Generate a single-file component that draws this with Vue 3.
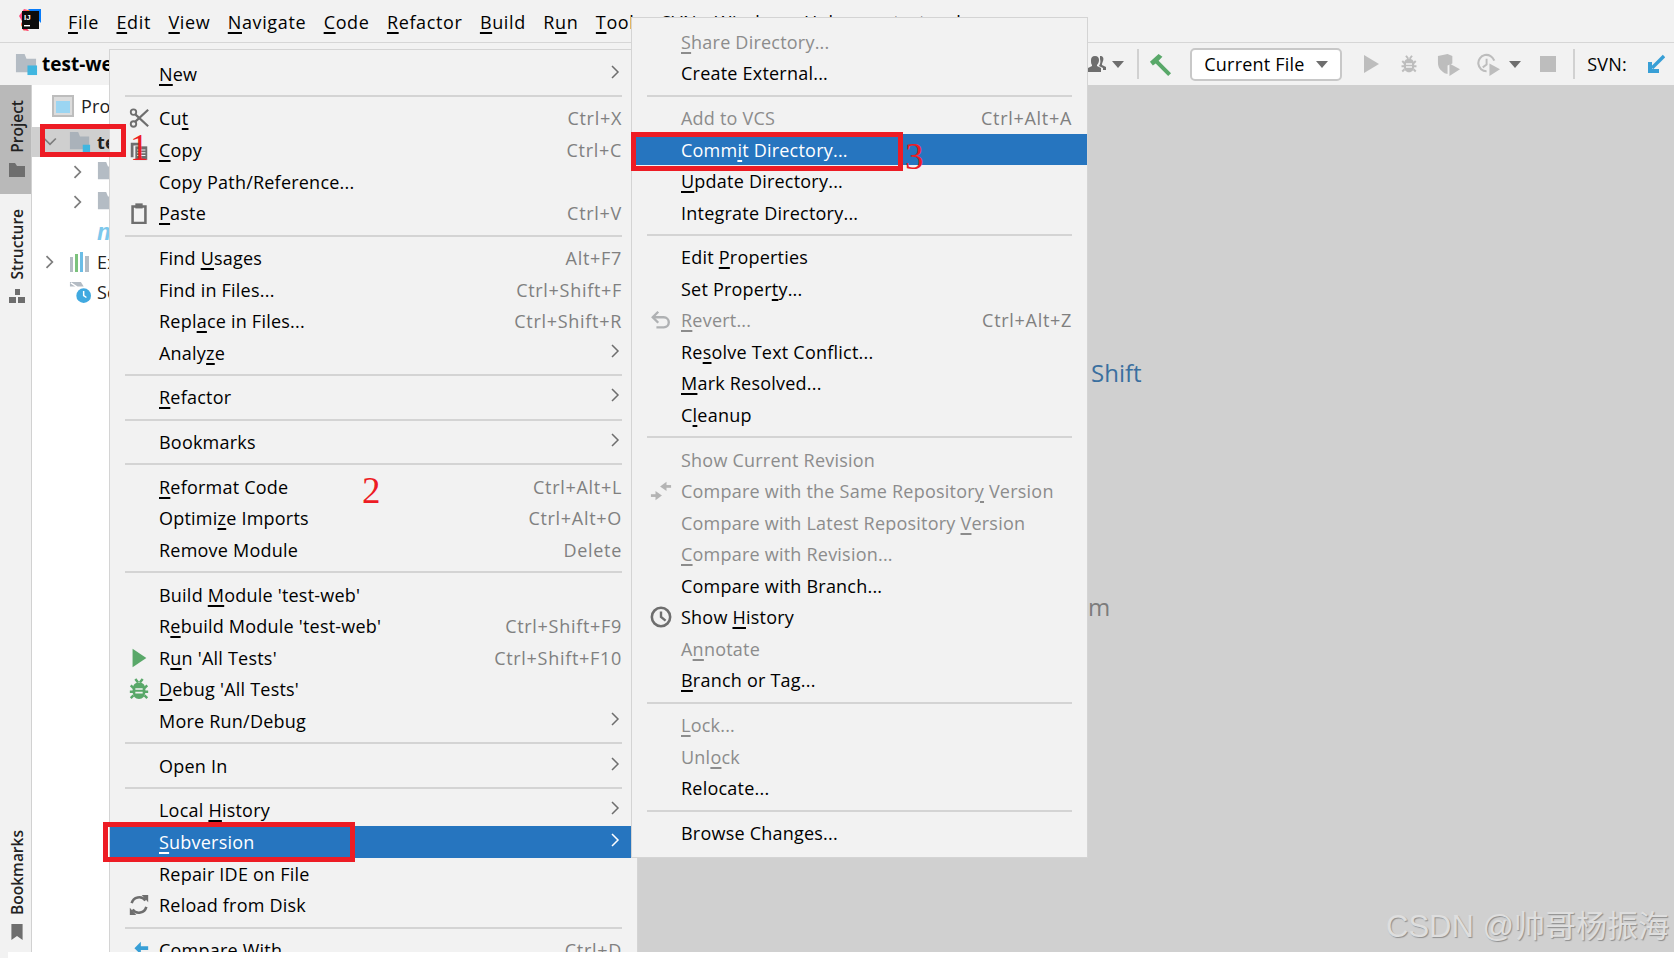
<script setup>
const parse = (s) => {
  const i = s.indexOf('_')
  return i < 0 ? [s, '', ''] : [s.slice(0, i), s[i + 1], s.slice(i + 2)]
}
const row = (label, opts = {}) => ({ label, parts: parse(label), ...opts })
const SEP = { sep: true }

const topMenus = ['_File', '_Edit', '_View', '_Navigate', '_Code', '_Refactor', '_Build', 'R_un', '_Tools', 'SVN', '_Window', '_Help'].map((m) => parse(m))

const mainMenu = [
  row('_New', { sub: true }), SEP,
  row('Cu_t', { sc: 'Ctrl+X', icon: 'cut' }),
  row('_Copy', { sc: 'Ctrl+C', icon: 'copy' }),
  row('Copy Path/Reference...'),
  row('_Paste', { sc: 'Ctrl+V', icon: 'paste' }), SEP,
  row('Find _Usages', { sc: 'Alt+F7' }),
  row('Find in Files...', { sc: 'Ctrl+Shift+F' }),
  row('Repl_ace in Files...', { sc: 'Ctrl+Shift+R' }),
  row('Analy_ze', { sub: true }), SEP,
  row('_Refactor', { sub: true }), SEP,
  row('Bookmarks', { sub: true }), SEP,
  row('_Reformat Code', { sc: 'Ctrl+Alt+L' }),
  row('Optimi_ze Imports', { sc: 'Ctrl+Alt+O' }),
  row('Remove Module', { sc: 'Delete' }), SEP,
  row("Build _Module 'test-web'"),
  row("R_ebuild Module 'test-web'", { sc: 'Ctrl+Shift+F9' }),
  row("R_un 'All Tests'", { sc: 'Ctrl+Shift+F10', icon: 'run' }),
  row("_Debug 'All Tests'", { icon: 'debug' }),
  row('More Run/Debug', { sub: true }), SEP,
  row('Open In', { sub: true }), SEP,
  row('Local _History', { sub: true }),
  row('_Subversion', { sub: true, active: true }),
  row('Repair IDE on File'),
  row('Reload from Disk', { icon: 'reload' }), SEP,
  row('Compare With', { sc: 'Ctrl+D', icon: 'compare' }),
]

const svnMenu = [
  row('_Share Directory...', { off: true }),
  row('Create External...'), SEP,
  row('Add to VCS', { off: true, sc: 'Ctrl+Alt+A' }),
  row('Comm_it Directory...', { active: true }),
  row('_Update Directory...'),
  row('Inte_grate Directory...'), SEP,
  row('Edit _Properties'),
  row('Set Proper_ty...'),
  row('_Revert...', { off: true, sc: 'Ctrl+Alt+Z', icon: 'revert' }),
  row('Re_solve Text Conflict...'),
  row('_Mark Resolved...'),
  row('C_leanup'), SEP,
  row('Show Current Revision', { off: true }),
  row('Compare with the Same Repositor_y Version', { off: true, icon: 'diff' }),
  row('Compare with Latest Repository _Version', { off: true }),
  row('_Compare with Revision...', { off: true }),
  row('Compare with Branch...'),
  row('Show _History', { icon: 'clock' }),
  row('A_nnotate', { off: true }),
  row('_Branch or Tag...'), SEP,
  row('_Lock...', { off: true }),
  row('Unl_ock', { off: true }),
  row('Relocate...'), SEP,
  row('Browse Changes...'),
]

const G = '#6e6e6e'
const icons = {
  cut: [
    { d: 'M3 5.5a3 3 0 1 0 6 0a3 3 0 1 0-6 0M3 18.5a3 3 0 1 0 6 0a3 3 0 1 0-6 0', s: G },
    { d: 'M8 8L22 21M8 16L22 3', s: G, w: 2.4 },
  ],
  copy: [
    { d: 'M3 4h9v3H6v13H3z', f: G },
    { d: 'M8 8h13v15H8z', f: G },
    { d: 'M10 12h9M10 15h9M10 18h9', s: '#f2f2f2', w: 1.2 },
  ],
  paste: [
    { d: 'M5 5h14v18H5z', s: G, w: 2.8 },
    { d: 'M8 1.5h8V7H8z', f: G },
  ],
  run: [{ d: 'M5 2L20 12L5 22z', f: '#59a869' }],
  debug: [
    { d: 'M12 5c5 0 7 3 7 9s-3 9-7 9s-7-3-7-9s2-9 7-9z', f: '#59a869' },
    { d: 'M8 1l3 4M16 1l-3 4M3 8l3 3M21 8l-3 3M2 15h4M22 15h-4M3 22l3-3M21 22l-3-3', s: '#59a869', w: 2.6 },
    { d: 'M8 12h8M8 16h8', s: '#f2f2f2', w: 1.8 },
  ],
  reload: [
    { d: 'M4 10a8.5 8.5 0 0 1 15-3', s: G, w: 2.8 },
    { d: 'M15 1h7v8z', f: G },
    { d: 'M20 14a8.5 8.5 0 0 1-15 3', s: G, w: 2.8 },
    { d: 'M9 23H2v-8z', f: G },
  ],
  compare: [
    { d: 'M22 8h-8V3l-7 7l7 7v-5h8z', f: '#389fd6' },
    { d: 'M2 23l5-8', s: '#389fd6', w: 3 },
  ],
  revert: [
    { d: 'M9 3L3 9l6 6', s: '#afb1b3', w: 2.6 },
    { d: 'M4 9h11a5 5 0 0 1 0 11H7', s: '#afb1b3', w: 2.6 },
  ],
  diff: [
    { d: 'M11 7l7-5v10z', f: '#b4b4b4' },
    { d: 'M16 7H23', s: '#b4b4b4', w: 3 },
    { d: 'M13 17l-7-5v10z', f: '#b4b4b4' },
    { d: 'M8 17H1', s: '#b4b4b4', w: 3 },
  ],
  clock: [
    { d: 'M2 12a10 10 0 1 0 20 0a10 10 0 1 0-20 0', s: G, w: 2.8 },
    { d: 'M12 6v6l5 4', s: G, w: 2.6 },
  ],
}
</script>

<template>
  <div class="ide">
    <header class="menubar">
      <svg class="logo" viewBox="0 0 24 24" aria-hidden="true">
        <path d="M1 8L6 1L14 3L8 20z" fill="#ff4d7e" />
        <path d="M3 17L9 2h10L6 23z" fill="#fc801d" />
        <path d="M10 1h13v14z" fill="#087cfa" />
        <path d="M3 14l8 9l-6-1z" fill="#fe2857" />
        <rect x="4" y="3" width="17" height="18" fill="#0c0c0c" />
        <text x="6" y="11.5" class="logo-text">IJ</text>
        <rect x="6" y="17" width="6" height="1.4" fill="#fff" />
      </svg>
      <nav class="top-items">
        <span v-for="m in topMenus" :key="m.join('')" class="top-item">{{ m[0] }}<u v-if="m[1]">{{ m[1] }}</u>{{ m[2] }}</span>
      </nav>
      <span class="title">test-web</span>
    </header>

    <div class="toolbar">
      <svg class="tb-folder" viewBox="0 0 24 24" aria-hidden="true">
        <path d="M1 1h9l2 5h10v14H1z" fill="#b4bcc4" />
        <rect x="13" y="13" width="10" height="10" fill="#40b6e0" />
      </svg>
      <strong class="crumb">test-web</strong>
      <div class="tb-right">
        <svg class="i20" viewBox="0 0 20 20"><path d="M8 2c3 0 4 2 4 4s-1 4-2 5v1l4 2v4H1v-4l4-2v-1C4 10 4 8 4 6s1-4 4-4z M13 2c3 0 4 2 3 5s-1 3-1 4l4 2v3h-3v-2l-4-2c1-2 2-4 1-7z" fill="#6e6e6e" /></svg>
        <span class="caret g5"></span>
        <span class="vsep g13"></span>
        <svg class="i23 g10" viewBox="0 0 24 24"><path d="M1 9L10 1l4 3l-4 4l13 13l-3 3L7 11l-3 2z" fill="#59a869" /></svg>
        <div class="combo g18"><span>Current File</span><span class="caret dark"></span></div>
        <svg class="i15 g22" viewBox="0 0 15 20"><path d="M0 1l15 9L0 19z" fill="#bdbdbd" /></svg>
        <svg class="i18 g21" viewBox="0 0 24 24">
          <path d="M12 5c5 0 7 3 7 9s-3 9-7 9s-7-3-7-9s2-9 7-9z" fill="#bdbdbd" />
          <path d="M8 1l3 4M16 1l-3 4M3 8l3 3M21 8l-3 3M2 15h4M22 15h-4M3 22l3-3M21 22l-3-3" stroke="#bdbdbd" stroke-width="2.6" fill="none" />
          <path d="M8 12h8M8 16h8" stroke="#f2f2f2" stroke-width="1.8" />
        </svg>
        <svg class="i23 g19" viewBox="0 0 24 24">
          <path d="M1 3l10-2l5 2v8l-5 2v9l-3-1c-5-3-7-6-7-11z" fill="#bdbdbd" />
          <path d="M13 11l11 6l-11 7z" fill="#bdbdbd" />
        </svg>
        <svg class="i23 g17" viewBox="0 0 24 24">
          <path d="M10 19a8.5 8.5 0 1 1 8-11" stroke="#bdbdbd" stroke-width="2.2" fill="none" />
          <path d="M10 6v6l-4 3" stroke="#bdbdbd" stroke-width="2" fill="none" />
          <path d="M13 11l11 6l-11 7z" fill="#bdbdbd" />
        </svg>
        <span class="caret g9"></span>
        <span class="stop g19"></span>
        <span class="vsep g17"></span>
        <span class="svn g12">SVN:</span>
        <svg class="i18 g20" viewBox="0 0 18 20"><path d="M17 2L5 14" stroke="#389fd6" stroke-width="3.4" fill="none" /><path d="M1 8v11h11v-4H5V8z" fill="#389fd6" /></svg>
      </div>
    </div>

    <div class="body">
      <aside class="strip">
        <div class="strip-top">
          <div class="tab active">
            <span class="vtext">Project</span>
            <svg class="tab-icon" viewBox="0 0 16 16"><path d="M0 1h6l2 3h8v11H0z" fill="#6e6e6e" /></svg>
          </div>
          <div class="tab">
            <span class="vtext">Structure</span>
            <svg class="tab-icon" viewBox="0 0 16 16"><path d="M6 1h5v6H6zM0 9h7v6H0zM9 9h7v6H9z" fill="#6e6e6e" /></svg>
          </div>
        </div>
        <div class="tab bottom">
          <span class="vtext">Bookmarks</span>
          <svg class="tab-icon" viewBox="0 0 16 20"><path d="M1 0h14v20l-7-5l-7 5z" fill="#6e6e6e" /></svg>
        </div>
      </aside>

      <section class="tree">
        <div class="tree-head">
          <svg class="t-ico" viewBox="0 0 22 22"><rect x="1" y="1" width="20" height="20" fill="#dcdcdc" stroke="#bdbdbd" stroke-width="2" /><rect x="4" y="6" width="14" height="12" fill="#9bd5f2" /></svg>
          <span class="t-text">Project</span>
        </div>
        <div class="tree-row selected">
          <svg class="chev" viewBox="0 0 12 12"><path d="M1 3l5 5l5-5" stroke="#7d7d7d" stroke-width="1.5" fill="none" /></svg>
          <svg class="t-ico" viewBox="0 0 24 24"><path d="M1 1h9l2 5h10v14H1z" fill="#aab2ba" /><rect x="15" y="15" width="8" height="8" fill="#40b6e0" /></svg>
          <b class="t-text">test-web</b>
        </div>
        <div class="tree-row l2">
          <svg class="chev" viewBox="0 0 12 12"><path d="M3 1l5 5l-5 5" stroke="#7d7d7d" stroke-width="1.5" fill="none" /></svg>
          <svg class="t-ico" viewBox="0 0 24 24"><path d="M1 1h9l2 5h10v14H1z" fill="#b4bcc4" /></svg>
        </div>
        <div class="tree-row l2">
          <svg class="chev" viewBox="0 0 12 12"><path d="M3 1l5 5l-5 5" stroke="#7d7d7d" stroke-width="1.5" fill="none" /></svg>
          <svg class="t-ico" viewBox="0 0 24 24"><path d="M1 1h9l2 5h10v14H1z" fill="#b4bcc4" /></svg>
        </div>
        <div class="tree-row l3"><i class="pom">m</i></div>
        <div class="tree-row">
          <svg class="chev" viewBox="0 0 12 12"><path d="M3 1l5 5l-5 5" stroke="#7d7d7d" stroke-width="1.5" fill="none" /></svg>
          <svg class="t-ico" viewBox="0 0 22 22"><path d="M1 6h3v15H1z" fill="#b4bcc4" /><path d="M6 3h3v18H6z" fill="#7cc27c" /><path d="M11 1h3v20h-3z" fill="#6bbde6" /><path d="M16 5h4v16h-4z" fill="#b4bcc4" /></svg>
          <span class="t-text">External Libraries</span>
        </div>
        <div class="tree-row">
          <svg class="chev ghost" viewBox="0 0 12 12"></svg>
          <svg class="t-ico" viewBox="0 0 24 24"><path d="M1 1h12l3 5H1z" fill="#b4bcc4" /><path d="M2 2l6 4l-6 4" stroke="#fff" stroke-width="1.5" fill="none" /><circle cx="16" cy="16" r="8" fill="#40a9e0" /><path d="M16 11v5l3 2" stroke="#fff" stroke-width="1.6" fill="none" /></svg>
          <span class="t-text">Scratches and Consoles</span>
        </div>
      </section>

      <main class="editor">
        <span class="hint shift">Shift</span>
        <span class="hint dim">m</span>
      </main>
    </div>

    <footer class="foot"></footer>

    <div class="menu main-menu">
      <template v-for="(r, i) in mainMenu" :key="i">
        <div v-if="r.sep" class="sep"></div>
        <div v-else class="item" :class="{ active: r.active, off: r.off }">
          <span class="slot">
            <svg v-if="r.icon" viewBox="0 0 24 24" class="m-ico">
              <path v-for="(p, k) in icons[r.icon]" :key="k" :d="p.d" :fill="p.f || 'none'" :stroke="p.s || 'none'" :stroke-width="p.w || 2" />
            </svg>
          </span>
          <span class="lbl">{{ r.parts[0] }}<u v-if="r.parts[1]">{{ r.parts[1] }}</u>{{ r.parts[2] }}</span>
          <span v-if="r.sc" class="sc">{{ r.sc }}</span>
          <svg v-if="r.sub" class="arrow" viewBox="0 0 10 16"><path d="M2 2l6 6l-6 6" fill="none" stroke="currentColor" stroke-width="1.5" /></svg>
        </div>
      </template>
    </div>

    <div class="menu svn-menu">
      <template v-for="(r, i) in svnMenu" :key="i">
        <div v-if="r.sep" class="sep"></div>
        <div v-else class="item" :class="{ active: r.active, off: r.off }">
          <span class="slot">
            <svg v-if="r.icon" viewBox="0 0 24 24" class="m-ico">
              <path v-for="(p, k) in icons[r.icon]" :key="k" :d="p.d" :fill="p.f || 'none'" :stroke="p.s || 'none'" :stroke-width="p.w || 2" />
            </svg>
          </span>
          <span class="lbl">{{ r.parts[0] }}<u v-if="r.parts[1]">{{ r.parts[1] }}</u>{{ r.parts[2] }}</span>
          <span v-if="r.sc" class="sc">{{ r.sc }}</span>
        </div>
      </template>
    </div>

    <div class="mark box-tree"></div>
    <div class="mark box-sub"></div>
    <div class="mark box-commit"></div>
    <span class="num n1">1</span>
    <span class="num n2">2</span>
    <span class="num n3">3</span>
    <span class="watermark">CSDN @帅哥杨振海</span>
  </div>
</template>

<style>
html, body { margin: 0; background: #fff; }
</style>

<style scoped>
.ide {
  position: relative;
  width: 1674px;
  height: 958px;
  overflow: hidden;
  display: flex;
  flex-direction: column;
  background: #f2f2f2;
  font-family: "Open Sans", "Noto Sans", sans-serif;
  font-size: 18px;
  letter-spacing: 0.22px;
  color: #000;
}
u { text-underline-offset: 3px; text-decoration-thickness: 1.5px; }

.menubar {
  height: 42px;
  flex: none;
  display: flex;
  align-items: center;
  padding-left: 18px;
  border-bottom: 1px solid #d6d6d6;
  box-sizing: content-box;
}
.logo { width: 24px; height: 24px; flex: none; margin-top: -2px; }
.logo-text { font: 700 8px "Liberation Sans", sans-serif; fill: #fff; letter-spacing: 0; }
.top-items { display: flex; gap: 17.5px; margin-left: 26px; padding-top: 1px; letter-spacing: 0.62px; }
.title { margin-left: 48px; padding-top: 1px; }

.toolbar {
  height: 42px;
  flex: none;
  display: flex;
  align-items: center;
  padding-left: 15px;
  padding-right: 9px;
}
.tb-folder { width: 23px; height: 23px; flex: none; }
.crumb { margin-left: 4px; font-size: 19px; font-weight: 700; letter-spacing: 0; }
.tb-right { margin-left: auto; display: flex; align-items: center; }
.i20 { width: 20px; height: 20px; flex: none; }
.i23 { width: 23px; height: 23px; flex: none; }
.i15 { width: 15px; height: 20px; flex: none; }
.i18 { width: 18px; height: 20px; flex: none; }
.caret { width: 0; height: 0; flex: none; border-left: 6px solid transparent; border-right: 6px solid transparent; border-top: 7px solid #6e6e6e; }
.vsep { width: 2px; height: 30px; background: #d1d1d1; flex: none; }
.stop { width: 16px; height: 16px; background: #bdbdbd; flex: none; }
.combo {
  width: 152px;
  height: 33px;
  box-sizing: border-box;
  background: #fff;
  border: 2px solid #c8c8c8;
  border-radius: 5px;
  display: flex;
  align-items: center;
  justify-content: space-between;
  padding: 0 12px;
  flex: none;
}
.g5 { margin-left: 5px; }
.g9 { margin-left: 9px; }
.g10 { margin-left: 10px; }
.g12 { margin-left: 12px; }
.g13 { margin-left: 13px; }
.g17 { margin-left: 17px; }
.g18 { margin-left: 18px; }
.g19 { margin-left: 19px; }
.g20 { margin-left: 20px; }
.g21 { margin-left: 21px; }
.g22 { margin-left: 22px; }

.body { flex: 1; min-height: 0; display: flex; }
.strip {
  width: 31px;
  flex: none;
  border-right: 1px solid #d1d1d1;
  display: flex;
  flex-direction: column;
  justify-content: space-between;
}
.tab { display: flex; flex-direction: column; align-items: center; padding: 15px 0 16px 3px; gap: 9px; }
.tab.active { background: #b9b9b9; }
.tab.bottom { padding-bottom: 12px; }
.vtext {
  writing-mode: vertical-rl;
  transform: rotate(180deg);
  font-size: 15.5px;
  font-weight: 600;
  letter-spacing: 0;
  color: #222;
}
.tab-icon { width: 16px; height: 16px; }
.tree { width: 78px; flex: none; background: #fff; overflow: hidden; white-space: nowrap; }
.tree-head { height: 42px; display: flex; align-items: center; padding-left: 20px; gap: 7px; }
.tree-row { height: 30px; display: flex; align-items: center; padding-left: 11px; gap: 6px; }
.tree-row.selected { background: #cfcfcf; }
.tree-row.l2 { padding-left: 39px; }
.tree-row.l3 { padding-left: 65px; }
.chev { width: 14px; height: 14px; flex: none; margin-right: 6px; }
.t-ico { width: 22px; height: 22px; flex: none; }
.t-text { color: #222; }
.pom { color: #7cc8ec; font-weight: 800; font-size: 24px; line-height: 1; font-family: "Liberation Sans", sans-serif; }

.editor {
  flex: 1;
  background: #d0d0d0;
  display: flex;
  flex-direction: column;
  align-items: flex-start;
  padding: 270px 0 0 981px;
}
.hint { font-size: 24px; line-height: 36px; letter-spacing: 0; }
.shift { color: #3a6f9f; }
.dim { color: #7c7c7c; margin-top: 198px; margin-left: -3px; }
.foot { height: 6px; flex: none; margin-left: 8px; background: #fff; }

.menu {
  position: absolute;
  box-sizing: border-box;
  background: #f2f2f2;
  border: 1px solid #d4d4d4;
  overflow: hidden;
}
.main-menu { left: 109px; top: 49px; width: 529px; height: 903px; padding-top: 8px; border-bottom: 0; }
.svn-menu { left: 631px; top: 17px; width: 457px; height: 841px; padding-top: 8px; }
.svn-menu .item { height: 31.55px; }
.item {
  height: 31.6px;
  display: flex;
  align-items: center;
  padding: 0 15px;
  white-space: nowrap;
}
.slot { width: 34px; flex: none; display: flex; align-items: center; }
.m-ico { width: 22px; height: 22px; margin-left: 3px; }
.lbl { flex: 1; }
.sc { color: #808080; letter-spacing: 0.7px; }
.arrow { width: 10px; height: 16px; color: #6e6e6e; margin-right: 2px; margin-top: -4px; }
.item.off { color: #8c8c8c; }
.item.active { background: #2675bf; color: #fff; }
.item.active .arrow { color: #fff; }
.sep { height: 2px; margin: 5.55px 15px; background: #d4d4d4; }

.mark { position: absolute; box-sizing: border-box; border: 5px solid #ed1c24; }
.box-tree { left: 40px; top: 124px; width: 86px; height: 33px; }
.box-sub { left: 103px; top: 822px; width: 252px; height: 40px; }
.box-commit { left: 631px; top: 132px; width: 272px; height: 39px; }
.num { position: absolute; color: #ed1c24; font-family: "Liberation Serif", serif; font-size: 37px; line-height: 1; letter-spacing: 0; }
.n1 { left: 130px; top: 129px; }
.n2 { left: 362px; top: 472px; }
.n3 { left: 905px; top: 138px; }
.watermark {
  position: absolute;
  left: 1386px;
  top: 907px;
  font-family: "Liberation Sans", "Noto Sans CJK SC", sans-serif;
  font-size: 31px;
  line-height: 40px;
  letter-spacing: 0;
  color: #dedede;
  text-shadow: 1px 1px 1px #8f8f8f;
  white-space: nowrap;
}
</style>
